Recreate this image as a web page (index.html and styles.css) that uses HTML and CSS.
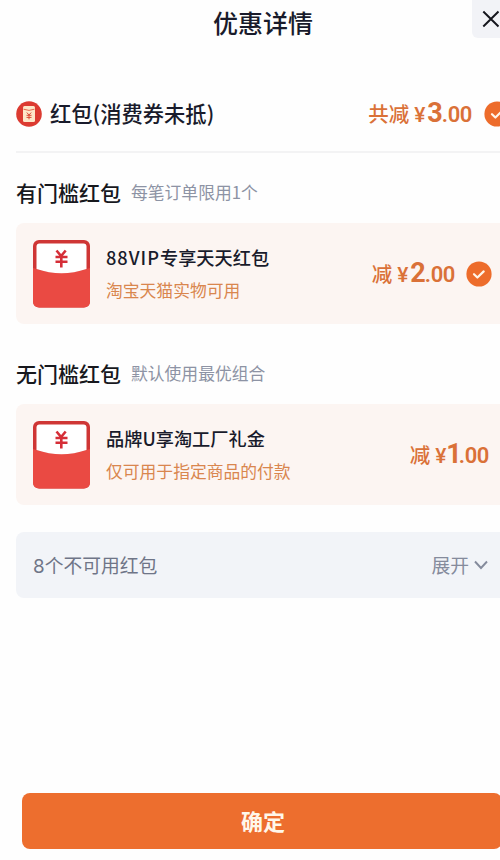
FILE: index.html
```html
<!DOCTYPE html>
<html lang="zh-CN">
<head>
<meta charset="utf-8">
<title>优惠详情</title>
<link rel="stylesheet" href="styles.css">
</head>
<body>
<svg class="defs" width="0" height="0" aria-hidden="true">
  <symbol id="check" viewBox="0 0 26 26">
    <circle cx="13" cy="13" r="12.6" fill="#ed6c2b"/>
    <path d="M8 13.200l3.400 3.300 6.300-6.100" fill="none" stroke="#fff5e9" stroke-width="2.200" stroke-linecap="round" stroke-linejoin="round"/>
  </symbol>
  <symbol id="packet" viewBox="0 0 57 69">
    <rect x="0" y="1" width="57" height="67.500" rx="6" fill="#cf3635"/>
    <path d="M0 29Q28.500 39 57 29V62Q57 68.500 50.500 68.500H6.500Q0 68.500 0 62Z" fill="#ea4a43"/>
    <path d="M3.500 7.500Q3.500 4.500 6.500 4.500H50.500Q53.500 4.500 53.500 7.500V30Q28.500 38.500 3.500 30Z" fill="#fff"/>
    <path d="M23.500 11.500l4.600 5.500 4.600-5.500M22.500 18h12M22.500 22.800h12M28.300 17v11.500" fill="none" stroke="#d52e37" stroke-width="2.600"/>
  </symbol>
</svg>
<main class="sheet">
  <header class="header">
    <h1 class="header-title">优惠详情</h1>
    <button class="close" aria-label="关闭"><svg width="20" height="20" viewBox="0 0 20 20"><path d="M2.300 2.500L17.500 17.500M17.500 2.500L2.300 17.500" stroke="#15161d" stroke-width="2"/></svg></button>
  </header>

  <section class="summary">
    <svg class="summary-icon" width="26" height="26" viewBox="0 0 26 26">
      <circle cx="13" cy="13" r="12.800" fill="#dc3b31"/>
      <rect x="7" y="5" width="12" height="16" rx="1.500" fill="#fde7c9"/>
      <path d="M7.500 8.200Q13 10.600 18.500 8.200" fill="none" stroke="#e5684e" stroke-width="1"/>
      <path d="M10.800 11.500l2.200 2.500 2.200-2.500M10.500 14.300h5M10.500 16.400h5M13 14v4.300" fill="none" stroke="#d94a36" stroke-width="1"/>
    </svg>
    <span class="summary-title">红包(消费券未抵)</span>
    <span class="price"><span class="price-label">共减</span><span class="yen">¥</span><span class="int">3</span><span class="dec">.00</span></span>
    <svg class="summary-check" width="26" height="26"><use href="#check"/></svg>
  </section>

  <section class="group">
    <div class="group-head"><h2 class="group-title">有门槛红包</h2><span class="group-note">每笔订单限用1个</span></div>
    <div class="coupon">
      <svg class="packet" width="57" height="69"><use href="#packet"/></svg>
      <div class="coupon-text"><div class="coupon-name"><span class="latin">88VIP</span>专享天天红包</div><div class="coupon-desc">淘宝天猫实物可用</div></div>
      <span class="price"><span class="price-label">减</span><span class="yen">¥</span><span class="int">2</span><span class="dec">.00</span></span>
      <svg class="coupon-check" width="26" height="26"><use href="#check"/></svg>
    </div>
  </section>

  <section class="group">
    <div class="group-head"><h2 class="group-title">无门槛红包</h2><span class="group-note">默认使用最优组合</span></div>
    <div class="coupon coupon-plain">
      <svg class="packet" width="57" height="69"><use href="#packet"/></svg>
      <div class="coupon-text"><div class="coupon-name">品牌U享淘工厂礼金</div><div class="coupon-desc">仅可用于指定商品的付款</div></div>
      <span class="price"><span class="price-label">减</span><span class="yen">¥</span><span class="int int-one">1</span><span class="dec">.00</span></span>
    </div>
  </section>

  <div class="unavailable">
    <span class="unavailable-text"><span class="count">8</span>个不可用红包</span>
    <span class="expand"><span class="unavailable-text">展开</span><svg width="14" height="10" viewBox="0 0 14 10"><path d="M1 1.500l6 6.500 6-6.500" fill="none" stroke="#858b9c" stroke-width="1.900"/></svg></span>
  </div>

  <button class="confirm">确定</button>
</main>
</body>
</html>
```

FILE: styles.css
```css
* { box-sizing: border-box; }
body {
  margin: 0;
  width: 500px;
  height: 860px;
  overflow: hidden;
  background: #fefefe;
  color: #191b2b;
  font-family: "Noto Sans CJK SC", sans-serif;
  white-space: nowrap;
}
h1, h2 { margin: 0; }
button { border: 0; padding: 0; font-family: inherit; }
svg { display: block; flex: none; }
.defs { position: absolute; }
.sheet { display: flex; flex-direction: column; height: 860px; }

.header { display: flex; align-items: flex-start; height: 76px; padding-left: 213px; }
.header-title { font-size: 25px; font-weight: 500; line-height: 44px; flex: 1; }
.close {
  display: flex;
  align-items: center;
  width: 28px;
  height: 38px;
  padding-left: 9px;
  overflow: hidden;
  border-radius: 0 0 0 6px;
  background: #f2f3f7;
}

.summary {
  display: flex;
  align-items: center;
  height: 77px;
  margin-left: 16px;
  border-bottom: 2px solid #f3f3f4;
  overflow: hidden;
}
.summary-title { margin-left: 8px; padding-bottom: 2px; font-size: 21.3px; font-weight: 500; }
.summary-check { margin: 0 -10px 0 12px; }

.price {
  display: flex;
  align-items: baseline;
  margin-left: auto;
  padding-top: 1px;
  color: #da7138;
  font-family: Roboto, sans-serif;
  font-weight: 500;
  line-height: 32px;
}
.price-label { font-family: "Noto Sans CJK SC", sans-serif; font-size: 20.5px; }
.yen { width: 12px; margin-left: 5px; font-size: 21px; }
.int { margin-left: 1px; font-size: 27px; font-weight: 700; letter-spacing: -1px; }
.int-one { margin-left: -1px; letter-spacing: -3px; }
.dec { font-size: 22px; font-weight: 600; letter-spacing: -0.4px; }

.group-head { display: flex; align-items: center; height: 70px; padding: 8px 0 0 16px; }
.group-title { font-size: 21px; font-weight: 500; color: #17181d; padding-bottom: 1px; }
.group-note { margin-left: 10px; font-size: 16.8px; color: #8d93a4; }
.coupon {
  display: flex;
  align-items: center;
  height: 101px;
  margin: 0 0 10px 16px;
  padding: 0 8px 0 17px;
  border-radius: 8px 0 0 8px;
  background: #fcf5f2;
}
.coupon-plain { padding-right: 11px; }
.coupon-text { margin-left: 16px; padding-top: 1px; }
.coupon-name { font-size: 18.2px; font-weight: 500; line-height: 33px; }
.latin { letter-spacing: 1px; }
.coupon-desc { font-size: 16.8px; line-height: 33px; color: #d9864e; }
.coupon-check { margin-left: 11px; }

.unavailable {
  display: flex;
  align-items: center;
  justify-content: space-between;
  height: 66px;
  margin: 17px 0 0 16px;
  padding: 0 12px 0 17px;
  border-radius: 8px 0 0 8px;
  background: #f2f4f8;
  color: #6f7587;
  font-size: 18.8px;
}
.unavailable-text { padding-bottom: 2px; }
.count { font-family: Inter, sans-serif; }
.expand { display: flex; align-items: center; gap: 5px; color: #858b9c; }
.confirm {
  height: 56px;
  margin: auto -2px 11px 22px;
  padding: 0 0 3px 2px;
  border-radius: 8px;
  background: #ed6e2e;
  color: #fff7ea;
  font-size: 22px;
  font-weight: 700;
}
```
